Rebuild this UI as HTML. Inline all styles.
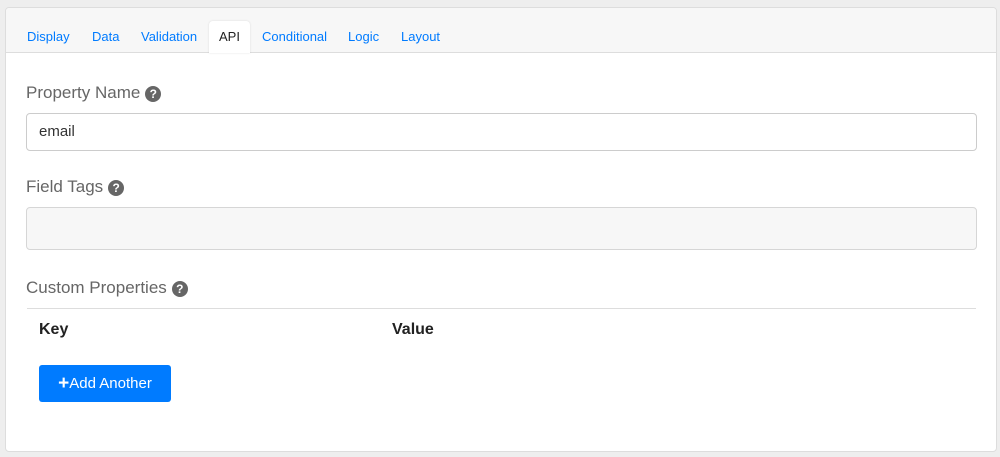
<!DOCTYPE html>
<html><head><style>
body{margin:0;background:#eee;font-family:"Liberation Sans",sans-serif;width:1000px;height:457px;position:relative;overflow:hidden}
.card{position:absolute;left:5px;top:7px;width:990px;height:443px;background:#fff;border:1px solid #ddd;border-radius:4px;overflow:hidden}
.hdr{position:absolute;left:0;top:0;width:990px;height:44px;background:#f7f7f7;border-bottom:1px solid #ddd}
.tab{position:absolute;top:21px;font-size:13px;color:#007bff}
.api{position:absolute;left:203px;top:13px;width:41px;height:32px;background:#fff;border-radius:4px 4px 0 0;box-shadow:0 0 2px rgba(0,0,0,.12);}
.lbl{position:absolute;left:20px;font-size:17px;color:#666}
.q{display:inline-block;width:16px;height:16px;border-radius:50%;background:#666;color:#fff;font-size:12px;font-weight:bold;text-align:center;line-height:16px;vertical-align:0px;margin-left:5px}
.inp{position:absolute;left:20px;width:949px;border:1px solid #ccc;border-radius:4px}
</style></head><body>
<div class="card">
<div class="hdr"></div>
<div class="api"></div>
<span class="tab" style="left:21px">Display</span>
<span class="tab" style="left:86px">Data</span>
<span class="tab" style="left:135px">Validation</span>
<span class="tab" style="left:213px;color:#222">API</span>
<span class="tab" style="left:256px">Conditional</span>
<span class="tab" style="left:342px">Logic</span>
<span class="tab" style="left:395px">Layout</span>
<div class="lbl" style="top:75px">Property Name<span class="q">?</span></div>
<div class="inp" style="top:105px;height:36px;font-size:15px;color:#333;line-height:36px;text-indent:12px">email</div>
<div class="lbl" style="top:169px">Field Tags<span class="q">?</span></div>
<div class="inp" style="top:199px;height:41px;background:#f7f7f7;border-color:#d6d6d6"></div>
<div class="lbl" style="top:270px">Custom Properties<span class="q">?</span></div>
<div style="position:absolute;left:21px;top:300px;width:949px;height:1px;background:#ddd"></div>
<div style="position:absolute;left:33px;top:313px;font-size:16px;font-weight:bold;color:#222">Key</div>
<div style="position:absolute;left:386px;top:313px;font-size:16px;font-weight:bold;color:#222">Value</div>
<div style="position:absolute;left:33px;top:357px;width:132px;height:37px;background:#007bff;border-radius:3px;color:#fff;font-size:15px;line-height:37px;text-align:center"><b style="font-size:19px;vertical-align:-1px">+</b>Add Another</div>
</div>
</body></html>
